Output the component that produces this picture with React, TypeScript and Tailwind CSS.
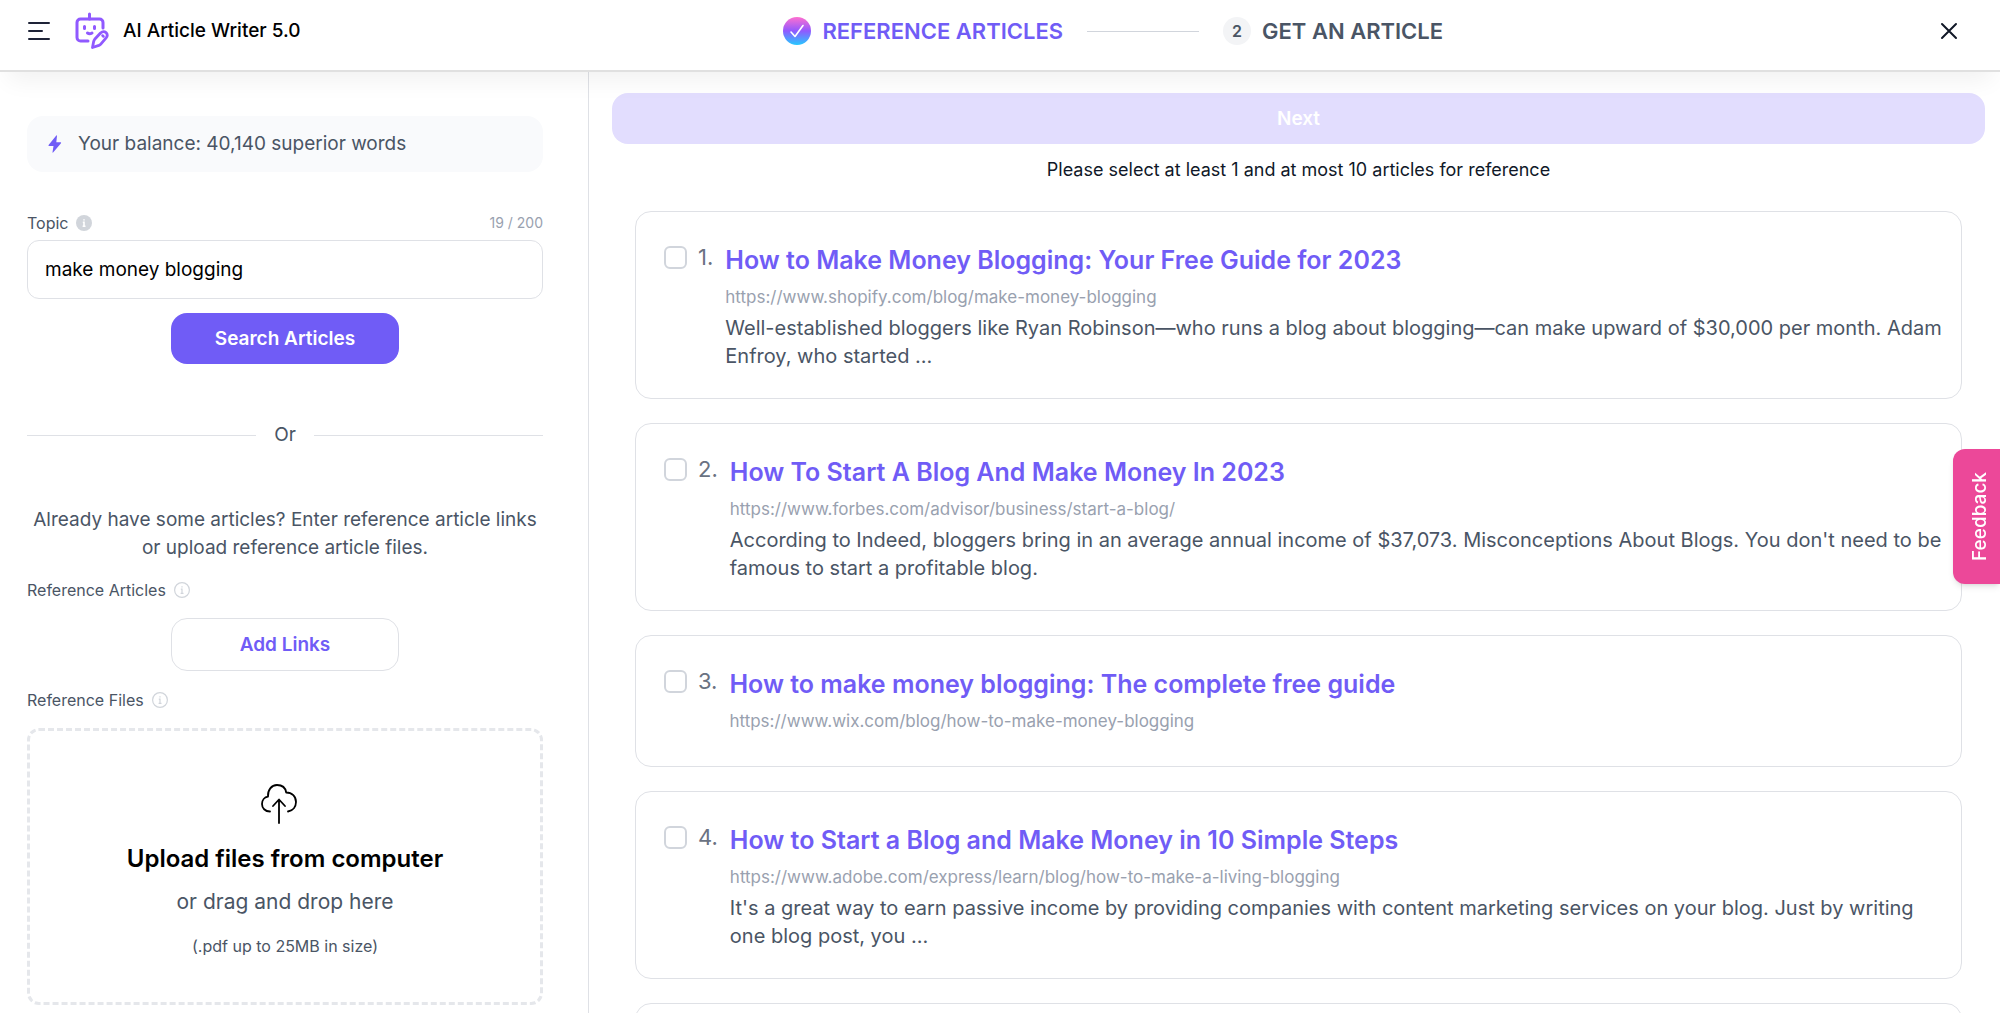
import React, { useState } from 'react';

interface Article {
    title: string;
    url: string;
    description?: string;
}

const ARTICLES: Article[] = [
    {
        title: 'How to Make Money Blogging: Your Free Guide for 2023',
        url: 'https://www.shopify.com/blog/make-money-blogging',
        description:
            'Well-established bloggers like Ryan Robinson—who runs a blog about blogging—can make upward of $30,000 per month. Adam Enfroy, who started ...',
    },
    {
        title: 'How To Start A Blog And Make Money In 2023',
        url: 'https://www.forbes.com/advisor/business/start-a-blog/',
        description:
            "According to Indeed, bloggers bring in an average annual income of $37,073. Misconceptions About Blogs. You don't need to be famous to start a profitable blog.",
    },
    {
        title: 'How to make money blogging: The complete free guide',
        url: 'https://www.wix.com/blog/how-to-make-money-blogging',
    },
    {
        title: 'How to Start a Blog and Make Money in 10 Simple Steps',
        url: 'https://www.adobe.com/express/learn/blog/how-to-make-a-living-blogging',
        description:
            "It's a great way to earn passive income by providing companies with content marketing services on your blog. Just by writing one blog post, you ...",
    },
];

const MenuIcon = () => (
    <svg width="22" height="18" viewBox="0 0 22 18" fill="none" stroke="#1e2337" strokeWidth="2" strokeLinecap="round">
        <path d="M1 1h20M1 9h13M1 17h20" />
    </svg>
);

const LogoIcon = () => (
    <svg width="34" height="38" viewBox="0 0 34 38" fill="none" stroke="#9059ff" strokeWidth="3" strokeLinecap="round" strokeLinejoin="round">
        <path d="M14.500 2v5" />
        <path d="M28 16V10.500a3.500 3.500 0 0 0-3.500-3.500H5.500A3.500 3.500 0 0 0 2 10.500v15A3.500 3.500 0 0 0 5.500 29H13" />
        <path d="M9.500 14.500v2M19.500 14.500v2" />
        <path d="M12.500 21q2 1.500 4.500 0" />
        <path d="M17.500 35.500l1.200-6.200q.3-1.200 1-2l5.800-6.300q3-2.600 5.500-.4 2.400 2.400.1 5.300l-5.300 6.200q-.8.900-1.900 1.300z" strokeWidth="2.800" />
        <path d="M27.500 23.500l1 1" strokeWidth="2.500" />
    </svg>
);

const CheckIcon = () => (
    <svg width="28" height="28" viewBox="0 0 28 28" fill="none">
        <defs>
            <linearGradient id="step" x1="0" y1="0" x2="0" y2="1">
                <stop offset="0" stopColor="#ff6fd0" />
                <stop offset="0.5" stopColor="#9059ff" />
                <stop offset="1" stopColor="#25c9ff" />
            </linearGradient>
        </defs>
        <circle cx="14" cy="14" r="14" fill="url(#step)" />
        <path d="M8 15l4 4.500L20 8.500" stroke="#fff" strokeWidth="1.600" strokeLinecap="round" strokeLinejoin="round" />
    </svg>
);

const CloseIcon = () => (
    <svg width="18" height="18" viewBox="0 0 18 18" fill="none" stroke="#111827" strokeWidth="2" strokeLinecap="round">
        <path d="M2 2l14 14M16 2L2 16" />
    </svg>
);

const BoltIcon = () => (
    <svg width="14" height="18" viewBox="0 0 14 18" fill="#705cf6">
        <path d="M8.300.4L.6 10.100q-.5.800.4.900h4.500l-1 6.300q0 .7.600.3L13 8.200q.4-.8-.4-.9H8.300L9 .8q0-.6-.7-.4z" />
    </svg>
);

const InfoIcon = ({ solid = false }: { solid?: boolean }) => (
    <svg width="16" height="16" viewBox="0 0 16 16" fill="none">
        <circle cx="8" cy="8" r={solid ? 8 : 7.4} fill={solid ? '#d1d5db' : 'none'} stroke={solid ? 'none' : '#d1d5db'} strokeWidth="1.200" />
        <path
            d="M8 4.200v1.200M6.800 7.200H8v4M6.600 11.300h2.900"
            stroke={solid ? '#fff' : '#d1d5db'}
            strokeWidth={solid ? 1.6 : 1.2}
        />
    </svg>
);

const CloudUploadIcon = () => (
    <svg width="36" height="40" viewBox="0 0 36 40" fill="none" stroke="#000" strokeWidth="1.800" strokeLinecap="round" strokeLinejoin="round">
        <path d="M9 27.500C4 27.500 1 24 1 20c0-4 2.500-7 6-7.400C6.500 6 10.500 1 16 1c5 0 8.500 3 9.200 7.500C31 8.500 35 12.500 35 18c0 4.500-3 8.500-8 9.500" />
        <path d="M18 39V16M12 22l6-6.500 6 6.500" />
    </svg>
);

const Header = () => (
    <header className="relative z-10 flex h-[72px] shrink-0 items-start justify-between border-b-2 border-[#e0e0e0] bg-white px-7 pt-3 shadow-[0_16px_24px_-8px_rgba(0,0,0,0.06)]">
        <div className="flex h-[38px] items-center">
            <button aria-label="Menu">
                <MenuIcon />
            </button>
            <span className="ml-[25px]">
                <LogoIcon />
            </span>
            <h1 className="ml-[14px] text-[19px] font-medium text-black">AI Article Writer 5.0</h1>
        </div>
        <ol className="flex h-[38px] items-center text-[22px] font-semibold">
            <li className="flex items-center gap-[11px] text-[#705cf6]">
                <CheckIcon />
                REFERENCE ARTICLES
            </li>
            <li className="mx-6 h-px w-28 bg-gray-300" aria-hidden="true" />
            <li className="flex items-center gap-[11px] text-gray-600">
                <span className="flex size-7 items-center justify-center rounded-full bg-gray-100 text-base">2</span>
                GET AN ARTICLE
            </li>
        </ol>
        <button aria-label="Close" className="flex h-[38px] items-center px-[14px]">
            <CloseIcon />
        </button>
    </header>
);

const Sidebar = () => {
    const [topic, setTopic] = useState('make money blogging');

    return (
        <aside className="flex w-[589px] shrink-0 flex-col border-r border-[#dfe1e6] pr-[45px] pl-[27px] pt-11 text-gray-600">
            <div className="flex h-14 shrink-0 items-center gap-4 rounded-2xl bg-[#f9fafc] px-[21px] text-[19px]">
                <BoltIcon />
                Your balance: 40,140 superior words
            </div>

            <div className="mt-[37px] mb-[3px] flex h-7 shrink-0 items-center justify-between">
                <label htmlFor="topic" className="flex items-center gap-2 text-base">
                    Topic <InfoIcon solid />
                </label>
                <span className="text-sm text-gray-400">{topic.length} / 200</span>
            </div>
            <input
                id="topic"
                type="text"
                maxLength={200}
                value={topic}
                onChange={(e) => setTopic(e.target.value)}
                className="h-[59px] w-full shrink-0 rounded-xl border border-[#dfe1e6] px-[17px] text-[19px] text-black outline-none"
            />
            <button className="mt-[14px] h-[51px] w-[228px] shrink-0 self-center rounded-2xl bg-[#705cf6] pt-px text-[19px] font-semibold text-white">
                Search Articles
            </button>

            <div className="mt-[57px] flex h-7 shrink-0 items-center gap-[18px] text-[19px]">
                <span className="h-px flex-1 bg-[#dfe1e6]" />
                Or
                <span className="h-px flex-1 bg-[#dfe1e6]" />
            </div>

            <p className="mt-[57px] text-center text-[19px] leading-7">
                Already have some articles? Enter reference article links
                <br />
                or upload reference article files.
            </p>

            <div className="mt-[14px] flex h-7 shrink-0 items-center gap-2 text-base">
                Reference Articles <InfoIcon />
            </div>
            <button className="mt-[14px] h-[53px] w-[228px] shrink-0 self-center rounded-2xl border border-[#dfe1e6] pt-px text-[19px] font-semibold text-[#705cf6]">
                Add Links
            </button>
            <label htmlFor="files" className="mt-[15px] flex h-7 shrink-0 items-center gap-2 text-base">
                Reference Files <InfoIcon />
            </label>
            <label className="mt-[14px] flex h-[277px] shrink-0 cursor-pointer flex-col items-center rounded-xl border-3 border-dashed border-gray-200 pt-[53px]">
                <input id="files" type="file" accept=".pdf" className="sr-only" />
                <span className="mr-3">
                    <CloudUploadIcon />
                </span>
                <span className="mt-[19px] text-2xl leading-8 font-semibold text-black">Upload files from computer</span>
                <span className="mt-[13px] text-[21px] leading-7">or drag and drop here</span>
                <span className="mt-4 text-base leading-7">(.pdf up to 25MB in size)</span>
            </label>
        </aside>
    );
};

const ArticleCard = ({ article, index }: { article: Article; index: number }) => (
    <li className="flex items-start rounded-2xl border border-[#dfe1e6] pt-[31px] pr-4 pb-7 pl-7">
        <label className="mr-3 flex h-7 shrink-0 items-center gap-[11px] text-[22px] text-gray-500">
            <input
                type="checkbox"
                aria-label={article.title}
                className="size-[23px] appearance-none rounded-md border-2 border-gray-300 checked:bg-[#705cf6]"
            />
            {index + 1}.
        </label>
        <div className="min-w-0 flex-1">
            <a href={article.url} className="block text-[25px] leading-[34px] font-semibold text-[#705cf6]">
                {article.title}
            </a>
            <p className="mt-[7px] mb-1 text-[17px] leading-[26px] text-gray-400">{article.url}</p>
            {article.description && <p className="text-xl leading-7 text-gray-600">{article.description}</p>}
        </div>
    </li>
);

export default function App() {
    return (
        <div className="flex h-screen flex-col overflow-hidden bg-white font-['Inter',sans-serif]">
            <Header />
            <div className="flex min-h-0 flex-1">
                <Sidebar />
                <main className="min-w-0 flex-1 overflow-hidden pt-[21px] pr-[15px] pl-[23px]">
                    <button disabled className="h-[51px] w-full rounded-2xl bg-[#e2ddfe] pt-px text-[19px] font-semibold text-white">
                        Next
                    </button>
                    <p className="mt-3 text-center text-lg leading-7 text-gray-900">
                        Please select at least 1 and at most 10 articles for reference
                    </p>
                    <ul className="mt-[27px] flex flex-col gap-6 px-[23px]">
                        {ARTICLES.map((article, index) => (
                            <ArticleCard key={article.url} article={article} index={index} />
                        ))}
                        <li className="h-[188px] rounded-2xl border border-[#dfe1e6]" />
                    </ul>
                </main>
            </div>
            <button className="fixed top-[449px] right-0 z-20 flex h-[135px] w-[47px] items-center justify-center rounded-l-xl bg-[#ec4899] pl-2 text-[19px] font-medium text-white shadow-md">
                <span className="rotate-180 [writing-mode:vertical-rl]">Feedback</span>
            </button>
        </div>
    );
}
